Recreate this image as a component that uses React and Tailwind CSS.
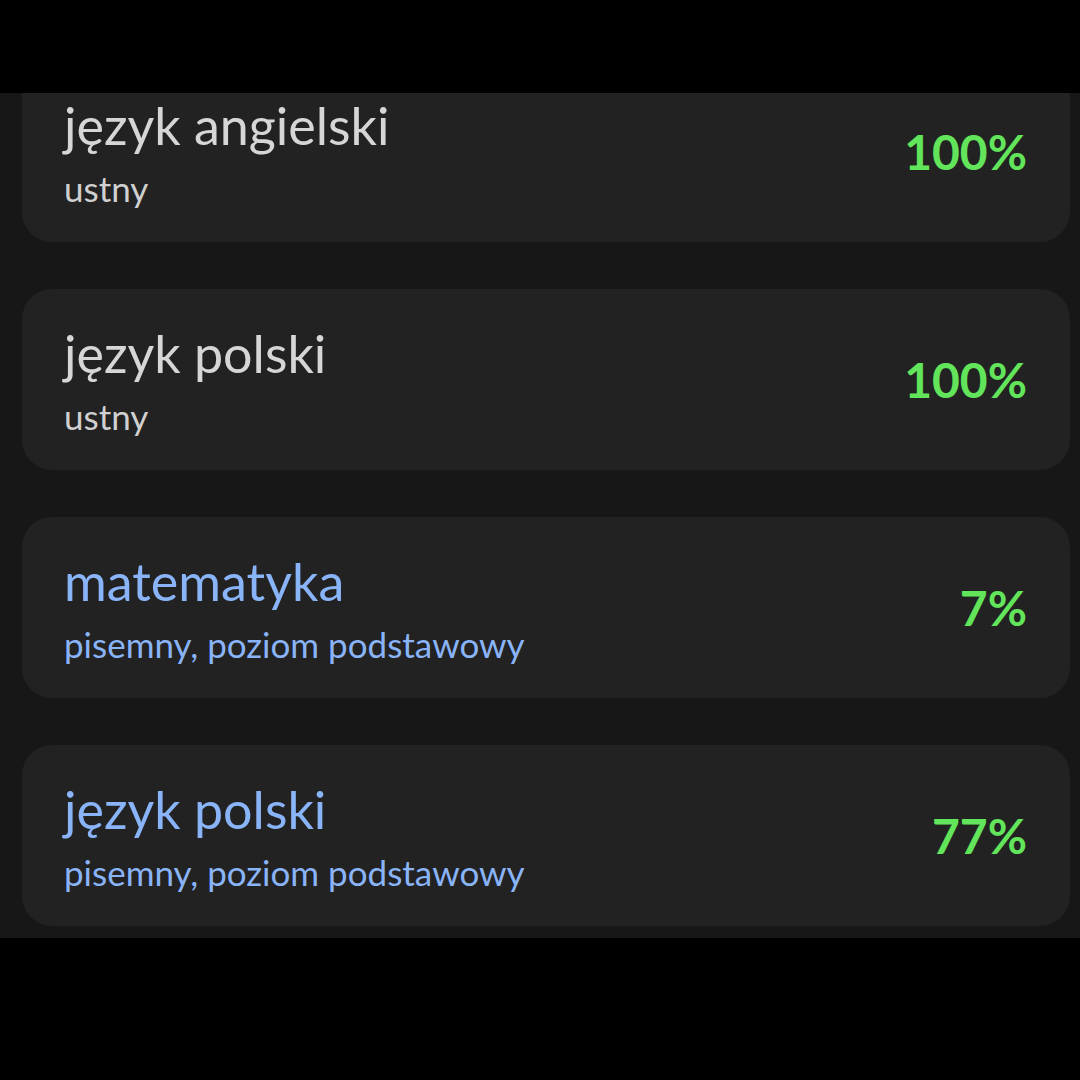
import React from 'react';

const results = [
  { subject: 'język angielski', kind: 'ustny', score: '100%', accent: false },
  { subject: 'język polski', kind: 'ustny', score: '100%', accent: false },
  { subject: 'matematyka', kind: 'pisemny, poziom podstawowy', score: '7%', accent: true },
  { subject: 'język polski', kind: 'pisemny, poziom podstawowy', score: '77%', accent: true },
];

function ResultCard({ subject, kind, score, accent }) {
  return (
    <div className="h-[181px] rounded-[30px] bg-[#222222] pl-[42px] pr-[43px] flex items-center justify-between">
      <div className="flex flex-col">
        <span
          className={`text-[52px] leading-[60px] ${accent ? 'text-[#8ab4f8]' : 'text-[#d6d6d6]'}`}
        >
          {subject}
        </span>
        <span
          className={`mt-[12px] text-[35px] leading-[42px] ${accent ? 'text-[#8ab4f8]' : 'text-[#d0d0d0]'}`}
        >
          {kind}
        </span>
      </div>
      <span className="text-[48px] font-bold text-[#62e55a]">{score}</span>
    </div>
  );
}

export default function App() {
  return (
    <div
      className="w-[1080px] h-[1080px] bg-black flex flex-col"
      style={{ fontFamily: 'Lato, "Noto Sans", sans-serif' }}
    >
      <div className="h-[93px] shrink-0" />
      <div className="h-[845px] shrink-0 bg-[#171717] overflow-hidden pl-[22px] pr-[10px]">
        <div className="-mt-[32px] flex flex-col gap-[47px]">
          {results.map((r, i) => (
            <ResultCard key={i} {...r} />
          ))}
        </div>
      </div>
    </div>
  );
}
